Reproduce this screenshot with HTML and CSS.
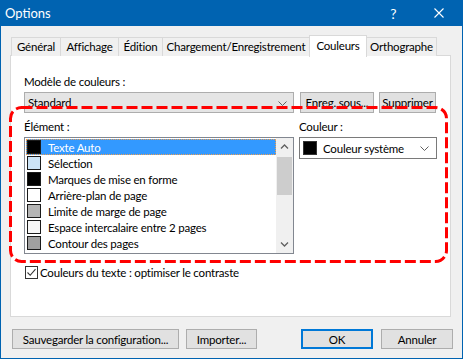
FILE: index.html
```html
<!DOCTYPE html>
<html lang="fr">
<head>
<meta charset="utf-8">
<title>Options</title>
<link rel="stylesheet" href="styles.css">
</head>
<body>
<div class="window">
  <div class="titlebar">
    <span class="title">Options</span>
    <span class="tb-btn help">?</span>
    <span class="tb-btn close">
      <svg width="10" height="10" viewBox="0 0 10 10"><path d="M0.5 0.5 L9.5 9.5 M9.5 0.5 L0.5 9.5" stroke="#fff" stroke-width="1.1" fill="none"/></svg>
    </span>
  </div>
  <div class="body">
    <div class="tabs">
      <div class="tab tab-general">Général</div>
      <div class="tab tab-affichage">Affichage</div>
      <div class="tab tab-edition">Édition</div>
      <div class="tab tab-charg">Chargement/Enregistrement</div>
      <div class="tab tab-couleurs active">Couleurs</div>
      <div class="tab tab-ortho">Orthographe</div>
    </div>
    <div class="panel">
      <div class="label">Modèle de couleurs :</div>
      <div class="row">
        <div class="combo combo-gray">
          <span class="combo-text">Standard</span>
          <svg class="chev" width="9" height="5" viewBox="0 0 9 5"><path d="M0.5 0.5 L4.5 4.5 L8.5 0.5" stroke="#606060" fill="none"/></svg>
        </div>
        <div class="btn btn-enreg">Enreg. sous...</div>
        <div class="btn btn-suppr">Supprimer</div>
      </div>
      <div class="cols">
        <div class="col-left">
          <div class="label">Élément :</div>
          <div class="listbox">
            <div class="items">
              <div class="item selected"><span class="sw sw-black"></span>Texte Auto</div>
              <div class="item"><span class="sw sw-sel"></span>Sélection</div>
              <div class="item"><span class="sw sw-black"></span>Marques de mise en forme</div>
              <div class="item"><span class="sw sw-white"></span>Arrière-plan de page</div>
              <div class="item"><span class="sw sw-grey"></span>Limite de marge de page</div>
              <div class="item"><span class="sw sw-offwhite"></span>Espace intercalaire entre 2 pages</div>
              <div class="item"><span class="sw sw-dgrey"></span>Contour des pages</div>
            </div>
            <div class="scrollbar">
              <div class="sb-arrow">
                <svg width="9" height="5" viewBox="0 0 9 5"><path d="M1 4.5 L4.5 1 L8 4.5" stroke="#606060" stroke-width="1.3" fill="none"/></svg>
              </div>
              <div class="sb-track"><div class="sb-thumb"></div></div>
              <div class="sb-arrow">
                <svg width="9" height="5" viewBox="0 0 9 5"><path d="M1 0.5 L4.5 4 L8 0.5" stroke="#606060" stroke-width="1.3" fill="none"/></svg>
              </div>
            </div>
          </div>
        </div>
        <div class="col-right">
          <div class="label">Couleur :</div>
          <div class="combo combo-white">
            <span class="sw sw-black"></span>
            <span class="combo-text">Couleur système</span>
            <svg class="chev" width="9" height="5" viewBox="0 0 9 5"><path d="M0.5 0.5 L4.5 4.5 L8.5 0.5" stroke="#606060" fill="none"/></svg>
          </div>
        </div>
      </div>
      <div class="check">
        <span class="checkbox">
          <svg width="11" height="11" viewBox="0 0 11 11"><path d="M1.5 5.5 L4.2 8.3 L9.5 2.2" stroke="#333" stroke-width="1.1" fill="none"/></svg>
        </span>
        <span>Couleurs du texte : optimiser le contraste</span>
      </div>
    </div>
    <div class="footer">
      <div class="btn btn-save">Sauvegarder la configuration...</div>
      <div class="btn btn-import">Importer...</div>
      <div class="btn btn-ok">OK</div>
      <div class="btn btn-cancel">Annuler</div>
    </div>
  </div>
  <svg class="highlight" width="440" height="158" viewBox="0 0 440 158">
    <rect x="1.5" y="1.5" width="436" height="154" rx="11" ry="11" fill="none" stroke="#ff0000" stroke-width="3" stroke-dasharray="11 4"/>
  </svg>
</div>
</body>
</html>
```

FILE: styles.css
```css
* { box-sizing: border-box; }
html, body { margin: 0; padding: 0; }
body {
  font-family: Lato, "Noto Sans", sans-serif;
  font-size: 11.5px;
  letter-spacing: -0.2px;
  color: #000;
  background: #fff;
}
.window {
  position: relative;
  width: 463px;
  height: 359px;
  border: 1px solid #0063b1;
  border-top: 0;
  background: #f0f0f0;
}
.titlebar {
  height: 26px;
  margin: 0 -1px;
  background: #0063b1;
  color: #fff;
  display: flex;
  align-items: center;
  font-size: 13px;
  letter-spacing: 0;
}
.title { padding-left: 5px; flex: 1; }
.tb-btn {
  width: 45px;
  height: 26px;
  display: flex;
  align-items: center;
  justify-content: center;
}
.help { font-size: 14px; }
.close { width: 46px; margin-right: 1px; }
.body { padding: 9px 0 0 9px; }
.tabs {
  display: flex;
  align-items: flex-end;
  height: 21px;
  padding-left: 1px;
  position: relative;
  z-index: 1;
}
.tab {
  height: 19px;
  border: 1px solid #d9d9d9;
  border-bottom: 0;
  margin-left: -1px;
  background: #f0f0f0;
  display: flex;
  align-items: center;
  justify-content: center;
  white-space: nowrap;
  padding-bottom: 1px;
}
.tab:first-child { margin-left: 0; }
.tab-general { width: 50px; }
.tab-affichage { width: 59px; }
.tab-edition { width: 45px; }
.tab-charg { width: 148px; }
.tab-couleurs { width: 58px; }
.tab-ortho { width: 71px; }
.tab.active {
  height: 22px;
  background: #fff;
  margin-bottom: -1px;
  padding-bottom: 3px;
}
.panel {
  width: 441px;
  height: 262px;
  margin-top: -1px;
  border: 1px solid #d9d9d9;
  background: #fff;
  padding: 18px 0 0 13px;
}
.label { height: 15px; line-height: 15px; margin-bottom: 3px; white-space: nowrap; }
.row { display: flex; height: 21px; }
.combo {
  display: flex;
  align-items: center;
  position: relative;
  white-space: nowrap;
}
.combo-gray {
  width: 270px;
  height: 21px;
  background: #e5e5e5;
  border: 1px solid #adadad;
  padding-left: 3px;
}
.combo-gray .chev { position: absolute; right: 6px; top: 8px; }
.combo-text { flex: 1; }
.btn {
  height: 21px;
  background: #e1e1e1;
  border: 1px solid #adadad;
  display: flex;
  align-items: center;
  justify-content: center;
  white-space: nowrap;
  overflow: hidden;
}
.btn-enreg { width: 74px; margin-left: 6px; }
.btn-suppr { width: 57px; margin-left: 5px; }
.cols { display: flex; margin-top: 6px; }
.col-left { width: 270px; }
.col-right { width: 138px; margin-left: 5px; }
.listbox {
  width: 270px;
  height: 117px;
  border: 1px solid #828790;
  display: flex;
}
.items { width: 251px; padding: 1px 0 0 1px; }
.item {
  height: 16px;
  display: flex;
  align-items: center;
  white-space: nowrap;
  overflow: hidden;
}
.item.selected {
  background: #3399ff;
  color: #fff;
  outline: 1px dotted #f0a050;
  outline-offset: -1px;
}
.sw {
  width: 14px;
  height: 14px;
  border: 1px solid #1a1a1a;
  margin: 0 7px 0 1px;
  flex: none;
}
.sw-black { background: #000; }
.sw-sel { background: #cce4f7; }
.sw-white { background: #fff; }
.sw-grey { background: #b4b4b4; }
.sw-offwhite { background: #f6f6f6; }
.sw-dgrey { background: #a0a0a0; }
.scrollbar {
  width: 17px;
  background: #f0f0f0;
  display: flex;
  flex-direction: column;
}
.sb-arrow {
  height: 17px;
  display: flex;
  align-items: center;
  justify-content: center;
}
.sb-track { flex: 1; padding-top: 2px; }
.sb-thumb { height: 38px; margin: 0 1px; background: #cdcdcd; }
.combo-white {
  width: 138px;
  height: 22px;
  background: #fff;
  border: 1px solid #7a7a7a;
  padding-left: 3px;
}
.combo-white .sw { width: 14px; height: 14px; margin: 0 6px 0 0; border-color: #333; }
.combo-white .chev { position: absolute; right: 7px; top: 8px; }
.check {
  display: flex;
  align-items: center;
  margin-top: 11px;
  margin-left: 1px;
  height: 15px;
  white-space: nowrap;
}
.checkbox {
  width: 13px;
  height: 13px;
  border: 1px solid #333;
  background: #fff;
  margin-right: 2px;
  display: flex;
  align-items: center;
  justify-content: center;
}
.footer {
  display: flex;
  margin-top: 12px;
  padding: 0 9px 0 2px;
}
.footer .btn { height: 20px; }
.btn-save { width: 167px; }
.btn-import { width: 71px; margin-left: 7px; }
.btn-ok {
  width: 72px;
  margin-left: auto;
  border: 2px solid #0078d7;
}
.btn-cancel { width: 72px; margin-left: 8px; }
.highlight {
  position: absolute;
  left: 8px;
  top: 106px;
}
```
